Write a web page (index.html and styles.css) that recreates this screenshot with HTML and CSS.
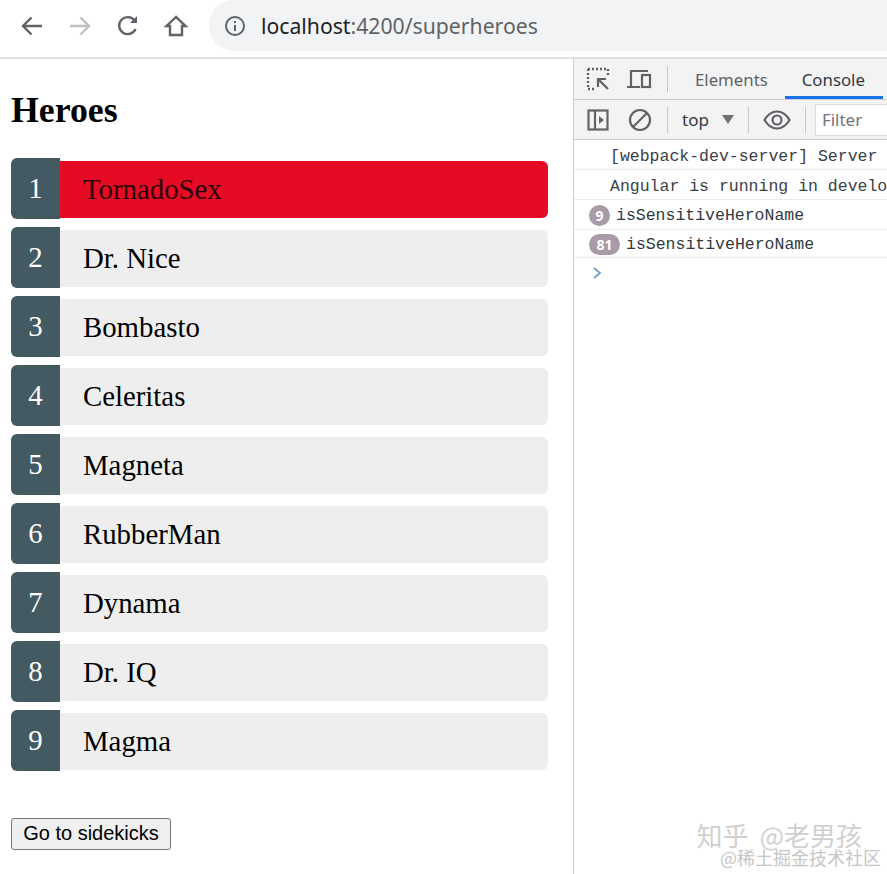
FILE: index.html
```html
<!DOCTYPE html>
<html lang="en">
<head>
<meta charset="utf-8">
<title>Heroes</title>
<link rel="stylesheet" href="styles.css">
</head>
<body>
<div class="page">
  <header class="toolbar">
    <button class="nav"><svg width="26" height="26" viewBox="0 0 26 26"><path d="M23 13H4M12.500 4.500L4 13l8.500 8.500" class="ic"/></svg></button>
    <button class="nav"><svg width="26" height="26" viewBox="0 0 26 26"><path d="M3 13h19M13.500 4.500L22 13l-8.500 8.500" class="ic ic-off"/></svg></button>
    <button class="nav"><svg width="26" height="26" viewBox="0 0 26 26"><path d="M20.500 16a8.500 8.500 0 1 1-1-8.500" class="ic"/><path d="M22 3v7h-7z" class="ic-fill"/></svg></button>
    <button class="nav nav-last"><svg width="26" height="26" viewBox="0 0 26 26"><path d="M13 4L3.500 13H7v9h12v-9h3.500z" class="ic"/></svg></button>
    <div class="omnibox">
      <svg class="info" width="22" height="22" viewBox="0 0 22 22"><circle cx="11" cy="11" r="9" class="ic thin"/><path d="M11 10v6M11 6v2" class="ic thin"/></svg>
      <span class="host">localhost</span><span class="path">:4200/superheroes</span>
    </div>
  </header>
  <div class="main">
    <main class="app">
      <h2 class="title">Heroes</h2>
      <ul class="heroes">
        <li class="hero sensitive"><span class="badge">1</span><span class="name">TornadoSex</span></li>
        <li class="hero"><span class="badge">2</span><span class="name">Dr. Nice</span></li>
        <li class="hero"><span class="badge">3</span><span class="name">Bombasto</span></li>
        <li class="hero"><span class="badge">4</span><span class="name">Celeritas</span></li>
        <li class="hero"><span class="badge">5</span><span class="name">Magneta</span></li>
        <li class="hero"><span class="badge">6</span><span class="name">RubberMan</span></li>
        <li class="hero"><span class="badge">7</span><span class="name">Dynama</span></li>
        <li class="hero"><span class="badge">8</span><span class="name">Dr. IQ</span></li>
        <li class="hero"><span class="badge">9</span><span class="name">Magma</span></li>
      </ul>
      <button class="go">Go to sidekicks</button>
    </main>
    <aside class="devtools">
      <div class="tabs">
        <svg class="tool" width="26" height="26" viewBox="0 0 26 26"><path d="M3 3h20M3 3v20M3 23h8M23 3v8" class="dots"/><path d="M23 23L13 13M13 21v-8h8" class="dt"/></svg>
        <svg class="tool device" width="28" height="26" viewBox="0 0 28 26"><path d="M5 20V5h17M1 21h13" class="dt"/><rect x="16" y="9" width="8" height="12" class="dt"/></svg>
        <span class="sep"></span>
        <span class="tab">Elements</span>
        <span class="tab active">Console</span>
      </div>
      <div class="filters">
        <svg class="tool" width="24" height="24" viewBox="0 0 24 24"><rect x="2.500" y="2.500" width="19" height="19" class="dt"/><path d="M9 3v18" class="dt"/><path d="M13 8l5 4-5 4z" class="dt-fill"/></svg>
        <svg class="tool block" width="24" height="24" viewBox="0 0 24 24"><circle cx="12" cy="12" r="10" class="dt"/><path d="M5 19L19 5" class="dt"/></svg>
        <span class="sep sep-a"></span>
        <span class="ctx">top</span>
        <span class="caret"></span>
        <span class="sep sep-b"></span>
        <svg class="tool" width="28" height="20" viewBox="0 0 28 20"><path d="M1.500 10C5 4 9 1.500 14 1.500S23 4 26.500 10C23 16 19 18.500 14 18.500S5 16 1.500 10z" class="dt"/><circle cx="14" cy="10" r="4.500" class="dt"/></svg>
        <span class="sep sep-c"></span>
        <span class="filter">Filter</span>
      </div>
      <div class="log">
        <div class="msg plain">[webpack-dev-server] Server</div>
        <div class="msg plain">Angular is running in develo</div>
        <div class="msg"><span class="count">9</span><span>isSensitiveHeroName</span></div>
        <div class="msg msg-short"><span class="count wide">81</span><span>isSensitiveHeroName</span></div>
        <div class="prompt"><svg width="10" height="14" viewBox="0 0 10 14"><path d="M2 2l6 5-6 5" class="chev"/></svg></div>
      </div>
    </aside>
  </div>
  <div class="watermark">
    <div class="wm-top">知乎 @老男孩</div>
    <div class="wm-bottom">@稀土掘金技术社区</div>
  </div>
</div>
</body>
</html>
```
FILE: styles.css
```css
* { box-sizing: border-box; }
html, body { margin: 0; height: 100%; background: #fff; overflow: hidden; }
.page { position: relative; width: 887px; height: 874px; display: flex; flex-direction: column; }
.toolbar { height: 59px; flex: none; display: flex; align-items: flex-start; padding: 0 0 0 19px; border-bottom: 2px solid #dfe1e3; background: #fff; }
.nav { width: 26px; height: 26px; margin: 13px 22px 0 0; padding: 0; border: 0; background: none; }
.nav-last { margin-right: 20px; }
.ic { fill: none; stroke: #5f6368; stroke-width: 2.4; }
.ic-off { stroke: #bdc0c4; }
.ic-fill { fill: #5f6368; }
.thin { stroke-width: 2; }
.omnibox { flex: 1; height: 51px; padding-left: 15px; border-radius: 25px 0 0 25px; background: #f1f3f4; display: flex; align-items: center; font: 21.200px "Noto Sans", sans-serif; }
.info { margin-right: 15px; flex: none; }
.host { color: #202124; }
.path { color: #5f6368; }
.main { flex: 1; display: flex; min-height: 0; }
.app { width: 573px; flex: none; padding: 0 0 0 11px; font-family: "Liberation Serif", serif; }
.title { margin: 31px 0 0; font-size: 35.800px; line-height: 40px; font-weight: bold; color: #000; }
.heroes { list-style: none; margin: 28px 0 0; padding: 0; width: 537px; }
.hero { height: 61px; margin-bottom: 8px; display: flex; align-items: flex-end; }
.hero .badge { width: 49px; height: 61px; flex: none; display: flex; align-items: center; justify-content: center; background: #435a62; color: #fff; font-size: 28.800px; border-radius: 6px 0 0 6px; }
.hero .name { flex: 1; height: 57px; margin-bottom: 1px; display: flex; align-items: center; padding-left: 23px; background: #eee; color: #000; font-size: 28.800px; border-radius: 0 6px 6px 0; }
.hero.sensitive .name { background: #e60a24; color: #2a0008; }
.go { display: block; margin-top: 47px; width: 160px; height: 32px; padding: 0 0 2px; border: 1px solid #767676; border-radius: 3px; background: #efefef; color: #000; font: 20px "Liberation Sans", sans-serif; }
.devtools { flex: 1; min-width: 0; border-left: 1px solid #cbcdd1; overflow: hidden; }
.tabs { height: 41px; display: flex; align-items: center; padding-left: 11px; background: #f3f3f3; border-bottom: 1px solid #cbcdd1; }
.tool { flex: none; }
.device { margin-left: 15px; }
.block { margin-left: 18px; }
.dt { fill: none; stroke: #5f6368; stroke-width: 2.200; }
.dt-fill { fill: #5f6368; }
.dots { fill: none; stroke: #5f6368; stroke-width: 2.400; stroke-dasharray: 2 2; }
.sep { width: 1px; height: 26px; background: #c4c6ca; flex: none; }
.tabs .sep { margin: 0 11px 0 13px; }
.tab { height: 40px; padding: 0 16px; font: 16.800px/41px "Noto Sans", sans-serif; color: #5f6368; white-space: nowrap; flex: none; margin-right: 1px; }
.tab.active { color: #303942; border-bottom: 3px solid #1a73e8; padding: 0 18px 0 17px; }
.filters { height: 40px; display: flex; align-items: center; padding-left: 12px; background: #f3f3f3; border-bottom: 1px solid #cbcdd1; font: 17px "Noto Sans", sans-serif; color: #303942; }
.ctx { color: #303942; }
.caret { width: 0; height: 0; margin-left: 13px; border: 6px solid transparent; border-top: 9px solid #6e7276; border-bottom: 0; flex: none; }
.sep-a { margin: 0 14px 0 15px; }
.sep-b { margin: 0 14px; }
.sep-c { margin: 0 9px 0 14px; }
.filter { flex: none; width: 90px; height: 32px; line-height: 30px; padding-left: 6px; background: #fff; border: 1px solid #dcdee0; color: #70757a; white-space: nowrap; overflow: hidden; }
.log { font: 16.500px "Liberation Mono", monospace; color: #303942; }
.msg { height: 30px; padding: 2px 0 0 15px; display: flex; align-items: center; gap: 6px; border-bottom: 1px solid #ececec; white-space: nowrap; }
.msg.plain { padding: 4px 0 0 36px; color: #3a4048; }
.msg-short { height: 28px; }
.count { width: 21px; height: 21px; border-radius: 11px; background: #a99aa7; color: #fff; font: bold 14px/21px "Noto Sans", sans-serif; text-align: center; flex: none; }
.count.wide { width: 31px; }
.prompt { padding: 8px 0 0 18px; }
.chev { fill: none; stroke: #6f9fd0; stroke-width: 1.800; }
.watermark { position: absolute; right: 6px; bottom: 8px; text-align: right; font-family: "Noto Sans CJK SC", sans-serif; line-height: 1; }
.wm-top { font-size: 26px; word-spacing: 5px; margin-right: 19px; color: #d0d0d0; }
.wm-bottom { font-size: 18px; color: #c6c6c6; }
```
